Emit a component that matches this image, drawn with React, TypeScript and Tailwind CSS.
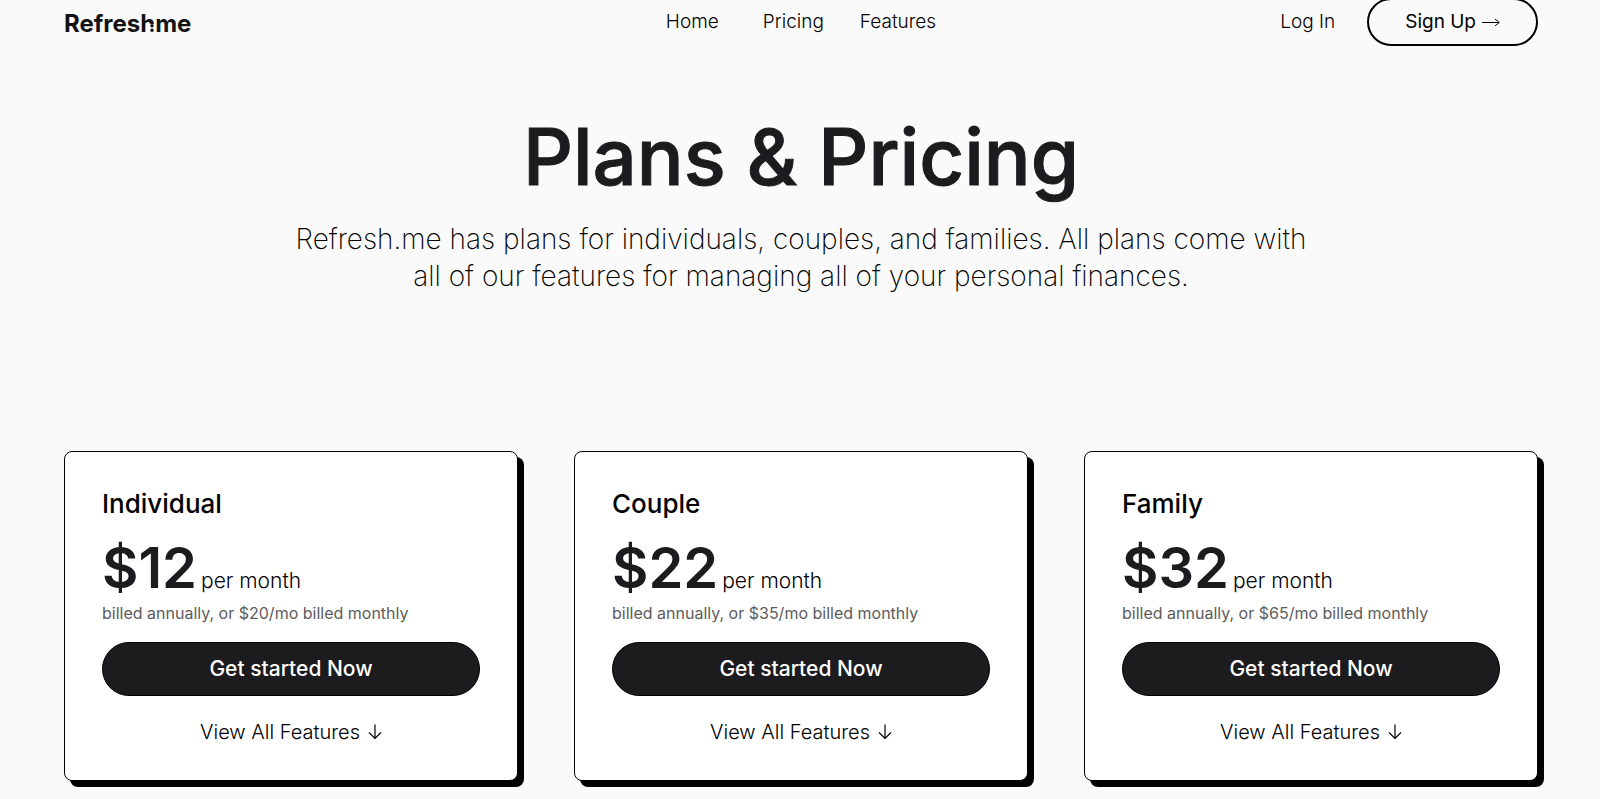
import React from 'react'

interface PlanCardProps {
    name: string;
    price: number;
    monthlyPrice: number;
}

const plans: PlanCardProps[] = [
    { name: 'Individual', price: 12, monthlyPrice: 20 },
    { name: 'Couple', price: 22, monthlyPrice: 35 },
    { name: 'Family', price: 32, monthlyPrice: 65 },
]

const ArrowRight = () => (
    <svg width="18" height="10" viewBox="0 0 18 10" fill="none" stroke="currentColor" aria-hidden="true">
        <path d="M0 5.5H17M13 2L17.3 5.5L13 9" strokeWidth="1" />
    </svg>
)

const ArrowDown = () => (
    <svg width="14" height="16" viewBox="0 0 14 16" fill="none" stroke="currentColor" aria-hidden="true">
        <path d="M7 0.5V14.5M1 8.5L7 14.5L13 8.5" strokeWidth="1.2" />
    </svg>
)

// The two dots cut into the right foot of the "h"
const LogoDots = () => (
    <svg width="6" height="8" viewBox="0 0 6 8" className="-ml-1.5 inline-block align-baseline" aria-hidden="true">
        <rect width="6" height="8" fill="#fafafa" />
        <circle cx="3" cy="1.8" r="1.7" fill="#131313" />
        <circle cx="3" cy="6.2" r="1.7" fill="#131313" />
    </svg>
)

const Navbar = () => {
  return (
    <header className="-mt-0.5 grid grid-cols-[1fr_auto_1fr] items-center text-[19px] font-light">
        <a href="#" className="pt-1 text-2xl font-bold leading-8 text-[#131313]">
            Refresh<LogoDots />me
        </a>

        <nav className="flex items-center">
            <a href="#">Home</a>
            <a href="#pricing" className="ml-11">Pricing</a>
            <a href="#features" className="ml-9">Features</a>
        </nav>

        <div className="flex items-center justify-end gap-8">
            <a href="#login">Log In</a>
            <button type="button" className="flex h-12 items-center gap-1.5 rounded-full border-2 border-black px-9 font-normal">
                Sign Up
                <ArrowRight />
            </button>
        </div>
    </header>
  )
}

const PlanCard = ({ name, price, monthlyPrice }: PlanCardProps) => {
  return (
    <article className="rounded-lg border border-black bg-white px-[37px] pt-9 pb-8 shadow-[6px_6px_0_0_#000]">
        <h2 className="text-[26px] font-medium leading-8">{name}</h2>
        <p className="mt-5 flex items-baseline gap-1">
            <span className="text-[56px] font-semibold leading-[56px] text-[#1c1c1e]">${price}</span>
            <span className="text-[21px] font-light leading-8">per month</span>
        </p>
        <p className="mt-1 text-base leading-6 text-[#5c5c5c]">
            billed annually, or ${monthlyPrice}/mo billed monthly
        </p>
        <button type="button" className="mt-[17px] h-[54px] w-full rounded-full border border-black bg-[#1c1c1e] text-[21px] font-medium text-white">
            Get started Now
        </button>
        <a href="#features" className="mt-5 flex items-center justify-center gap-2 text-xl font-light leading-8">
            View All Features
            <ArrowDown />
        </a>
    </article>
  )
}

const App = () => {
  return (
    <div className="min-h-screen overflow-hidden bg-[#fafafa] pr-[62px] pb-3 pl-16 font-['Inter',sans-serif] text-black">
        <Navbar />

        <main>
            <section className="mx-auto mt-[67px] max-w-[1040px] text-center">
                <h1 className="text-[78px] font-medium leading-[88px] text-[#1c1c1e] [-webkit-text-stroke:1px_#1c1c1e]">
                    Plans &amp; Pricing
                </h1>
                <p className="mt-5 text-[28px] font-extralight leading-[37px]">
                    Refresh.me has plans for individuals, couples, and families. All plans come with all of our features for managing all of your personal finances.
                </p>
            </section>

            <section id="pricing" className="mt-39 grid grid-cols-3 gap-14">
                {plans.map((plan) => (
                    <PlanCard key={plan.name} {...plan} />
                ))}
            </section>
        </main>
    </div>
  )
}

export default App
